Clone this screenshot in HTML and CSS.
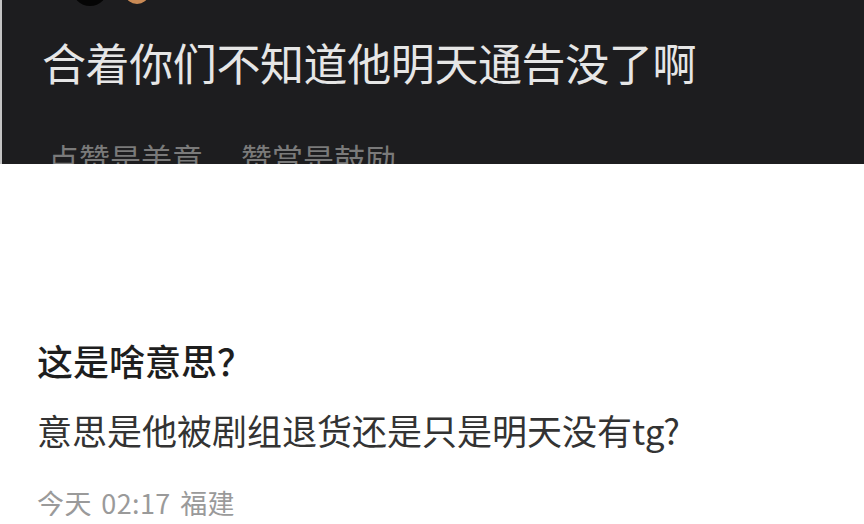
FILE: index.html
```html
<!DOCTYPE html>
<html>
<head>
    <title>评论</title>
    <meta name="viewport" content="width=device-width, initial-scale=1">
    <link rel="stylesheet" href="styles.css">
</head>
<body>
    <div class="post-card">
        <span class="avatar"></span>
        <span class="avatar-badge"></span>
        <div class="post-text">合着你们不知道他明天通告没了啊</div>
        <div class="post-footer">
            <span>点赞是美意</span>
            <span>赞赏是鼓励</span>
        </div>
    </div>

    <div class="comment">
        <div class="comment-title">这是啥意思？</div>
        <div class="comment-body">意思是他被剧组退货还是只是明天没有tg?</div>
        <div class="comment-meta">今天 02:17 福建</div>
    </div>
</body>
</html>
```

FILE: styles.css
```css
body {
    margin: 0;
    background-color: #fff;
    font-family: "Noto Sans CJK SC", "Noto Sans", sans-serif;
    overflow: hidden;
}
.post-card {
    position: relative;
    height: 164px;
    padding-left: 40px;
    background-color: #1d1d1f;
    overflow: hidden;
    border-left: 2px solid #c4c4c4;
    box-sizing: border-box;
}
.avatar {
    position: absolute;
    left: 70px;
    top: -30px;
    width: 36px;
    height: 36px;
    border-radius: 50%;
    background-color: #050505;
}
.avatar-badge {
    position: absolute;
    left: 124px;
    top: -14px;
    width: 22px;
    height: 18px;
    border-radius: 50%;
    background-color: #c98a55;
}
.post-text {
    padding-top: 40px;
    font-size: 44px;
    line-height: 44px;
    color: #e6e6e6;
    letter-spacing: -0.4px;
}
.post-footer {
    display: flex;
    gap: 38px;
    margin-top: 58px;
    padding-left: 6px;
    font-size: 31px;
    line-height: 31px;
    color: #7a7a7a;
}
.comment {
    padding: 178px 0 0 37px;
}
.comment-title {
    font-size: 36px;
    line-height: 36px;
    font-weight: 500;
    color: #1e1e1e;
}
.comment-body {
    margin-top: 34px;
    font-size: 35px;
    line-height: 35px;
    color: #333;
}
.comment-meta {
    margin-top: 42px;
    font-size: 27px;
    line-height: 27px;
    color: #9a9a9a;
    word-spacing: 3px;
    letter-spacing: 0.4px;
}
```
